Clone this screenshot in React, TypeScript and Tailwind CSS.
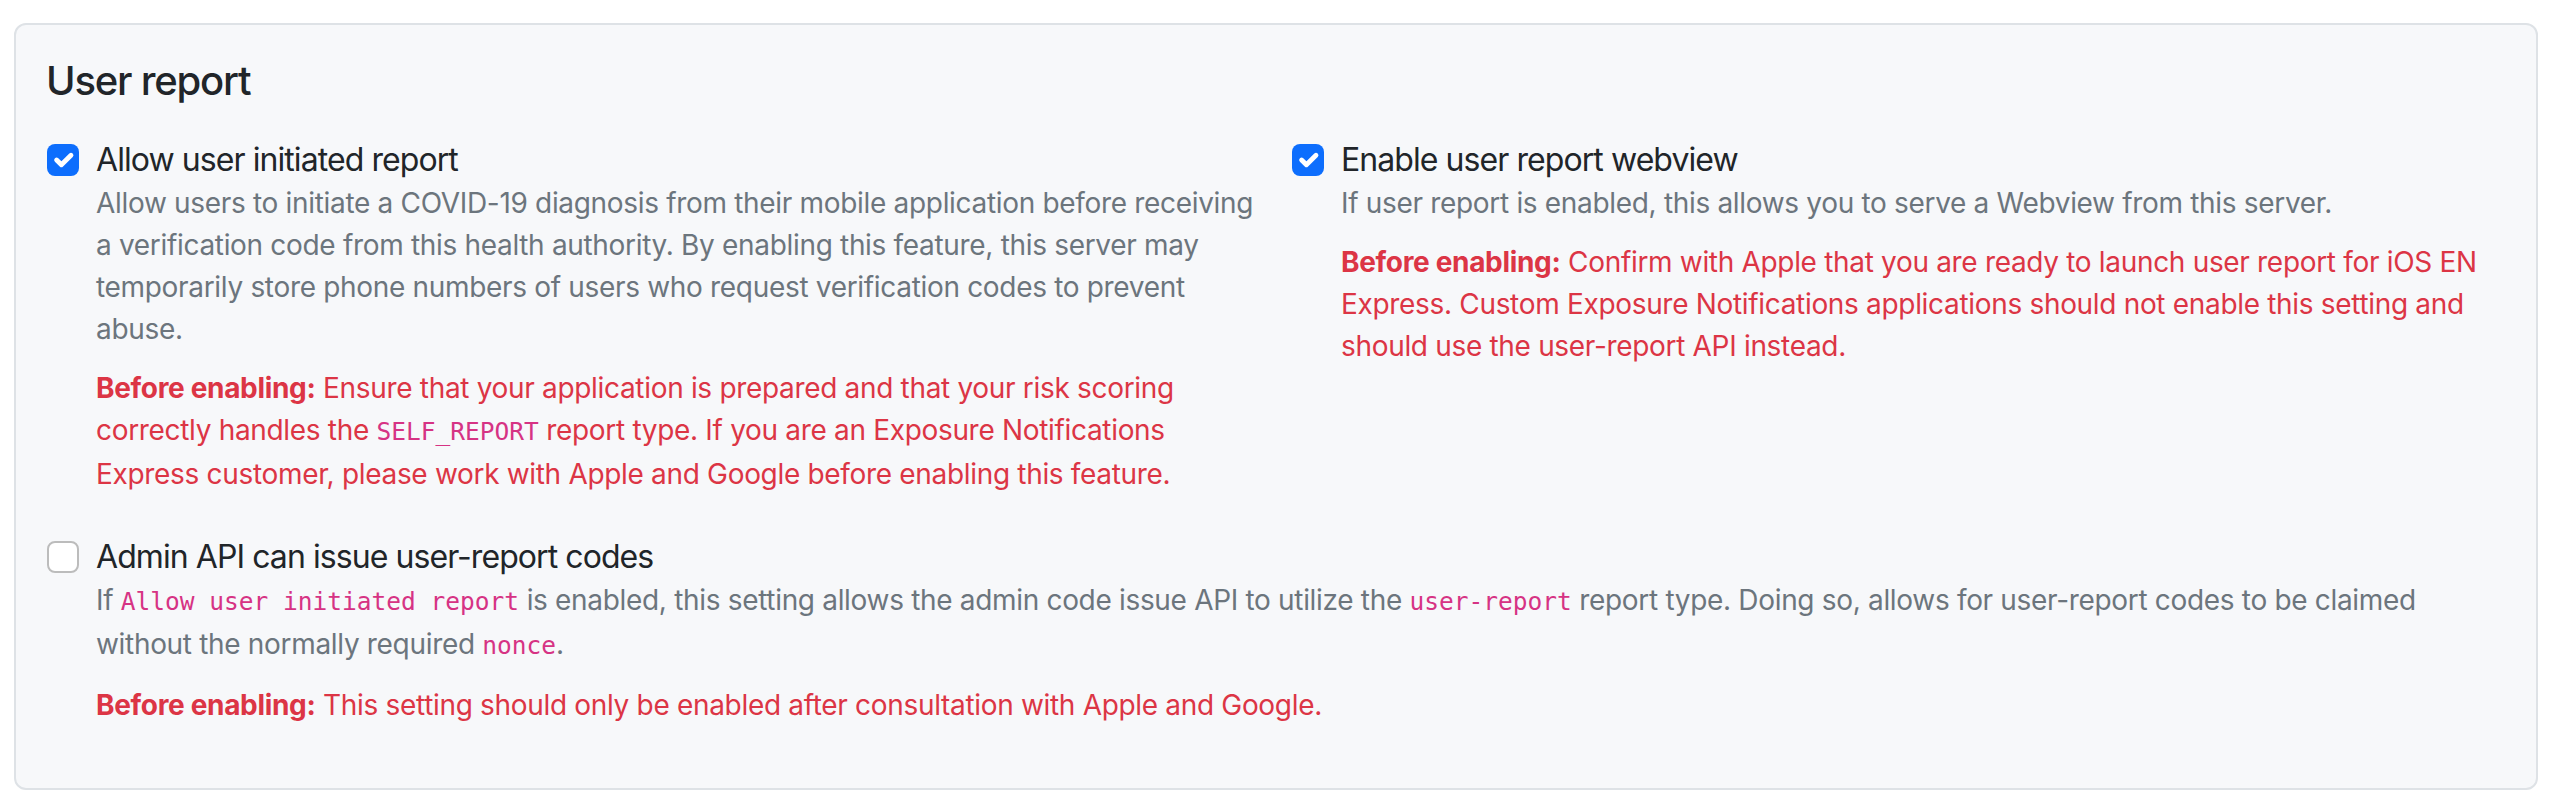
import React from 'react';

function Box({ checked }: { checked: boolean }) {
    if (checked) {
        return (
            <div className="ml-px mt-[8px] flex h-[32px] w-[32px] shrink-0 items-center justify-center rounded-[8px] bg-[#0d6efd]">
                <svg viewBox="0 0 20 20" className="h-[32px] w-[32px]">
                    <path d="m6 10 3 3 6-6" fill="none" stroke="#fff" strokeWidth="3" strokeLinecap="round" strokeLinejoin="round" />
                </svg>
            </div>
        );
    }
    return <div className="ml-px mt-[8px] h-[32px] w-[32px] shrink-0 rounded-[8px] border-2 border-[#bcbcbc] bg-white" />;
}

function Code({ children }: { children: React.ReactNode }) {
    return <code className="font-['DejaVu_Sans_Mono',monospace] text-[24.5px] tracking-normal text-[#d63384]">{children}</code>;
}

function Setting({
    checked,
    title,
    children,
    warning,
}: {
    checked: boolean;
    title: string;
    children: React.ReactNode;
    warning: React.ReactNode;
}) {
    return (
        <div className="flex">
            <Box checked={checked} />
            <div className="ml-[17px] min-w-0 flex-1">
                <div className="text-[32px] leading-[48px] tracking-[-0.029em] text-[#212529]">{title}</div>
                <div className="-mt-[2px] text-[28px] leading-[42px] text-[#6c757d]">{children}</div>
                <div className="mt-[17px] text-[28px] leading-[42px] text-[#dc3545]">
                    <span className="font-bold">Before enabling:</span> {warning}
                </div>
            </div>
        </div>
    );
}

export default function App() {
    return (
        <div className="min-h-[808px] bg-white pt-[23px] pl-[14px] pr-[16px] font-['Inter','Liberation_Sans',sans-serif] tracking-[-0.02em]">
            <div className="rounded-[12px] border-2 border-[#dee2e6] bg-[#f7f8fa] px-[30px] pt-[32px] pb-[62px]">
                <h5 className="mb-[31px] text-[40px] font-medium leading-[48px] tracking-[-0.03em] text-[#212529]">User report</h5>
                <div className="grid grid-cols-2 gap-x-[30px]">
                    <Setting
                        checked
                        title="Allow user initiated report"
                        warning={
                            <>
                                Ensure that your application is prepared and that your risk scoring correctly handles the{' '}
                                <Code>SELF_REPORT</Code> report type. If you are an Exposure Notifications Express customer,
                                please work with Apple and Google before enabling this feature.
                            </>
                        }
                    >
                        Allow users to initiate a COVID-19 diagnosis from their mobile application before receiving a
                        verification code from this health authority. By enabling this feature, this server may temporarily
                        store phone numbers of users who request verification codes to prevent abuse.
                    </Setting>
                    <Setting
                        checked
                        title="Enable user report webview"
                        warning={
                            <>
                                Confirm with Apple that you are ready to launch user report for iOS EN Express. Custom Exposure
                                Notifications applications should not enable this setting and should use the user-report API
                                instead.
                            </>
                        }
                    >
                        If user report is enabled, this allows you to serve a Webview from this server.
                    </Setting>
                </div>
                <div className="mt-[38px]">
                    <Setting
                        checked={false}
                        title="Admin API can issue user-report codes"
                        warning={<>This setting should only be enabled after consultation with Apple and Google.</>}
                    >
                        If <Code>Allow user initiated report</Code> is enabled, this setting allows the admin code issue API to
                        utilize the <Code>user-report</Code> report type. Doing so, allows for user-report codes to be claimed
                        without the normally required <Code>nonce</Code>.
                    </Setting>
                </div>
            </div>
        </div>
    );
}
